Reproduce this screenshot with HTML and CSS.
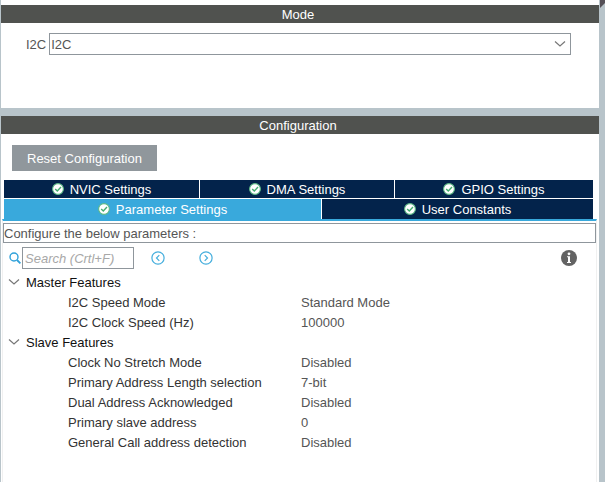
FILE: index.html
```html
<!DOCTYPE html>
<html lang="en">
<head>
<meta charset="utf-8">
<title>I2C Mode and Configuration</title>
<link rel="stylesheet" href="styles.css">
</head>
<body>
<svg class="defs" aria-hidden="true">
  <symbol id="check" viewBox="0 0 12 12">
    <circle cx="6" cy="6" r="5.4" fill="#fff" stroke="#5dba86" stroke-width="1.1"/>
    <path d="M3.2 6l2.1 2.1 3.7-4" fill="none" stroke="#45ad70" stroke-width="1.4"/>
  </symbol>
  <symbol id="chevron" viewBox="0 0 12 8">
    <path d="M1 1.5l5 4.5 5-4.5" fill="none" stroke="#777" stroke-width="1.2"/>
  </symbol>
</svg>
<main class="app">
  <section class="panel mode">
    <h2 class="bar">Mode</h2>
    <div class="mode-row">
      <label for="i2c">I2C</label>
      <div class="select-box">
        <select id="i2c"><option>I2C</option></select>
        <svg class="select-arrow"><use href="#chevron"/></svg>
      </div>
    </div>
  </section>
  <section class="panel config">
    <h2 class="bar">Configuration</h2>
    <button class="reset" type="button">Reset Configuration</button>
    <div class="tabs" role="tablist">
      <div class="tab-row top">
        <button class="tab" role="tab"><svg class="check"><use href="#check"/></svg>NVIC Settings</button>
        <button class="tab" role="tab"><svg class="check"><use href="#check"/></svg>DMA Settings</button>
        <button class="tab" role="tab"><svg class="check"><use href="#check"/></svg>GPIO Settings</button>
      </div>
      <div class="tab-row bottom">
        <button class="tab active" role="tab" aria-selected="true"><svg class="check"><use href="#check"/></svg>Parameter Settings</button>
        <button class="tab" role="tab"><svg class="check"><use href="#check"/></svg>User Constants</button>
      </div>
    </div>
    <div class="content">
      <p class="hint">Configure the below parameters :</p>
      <div class="toolbar">
        <label class="search-label" for="search" aria-label="Search">
          <svg class="lens" viewBox="0 0 12 12"><circle cx="5" cy="5" r="4" fill="none" stroke="#32a2da" stroke-width="1.4"/><path d="M8 8l3.4 3.4" stroke="#32a2da" stroke-width="1.8"/></svg>
        </label>
        <input id="search" class="search" type="text" placeholder="Search (Crtl+F)">
        <button class="nav" type="button" aria-label="Previous"><svg viewBox="0 0 14 14"><circle cx="7" cy="7" r="6.1"/><path d="M8.3 4.2L5.5 7l2.8 2.8"/></svg></button>
        <button class="nav next" type="button" aria-label="Next"><svg viewBox="0 0 14 14"><circle cx="7" cy="7" r="6.1"/><path d="M5.7 4.2L8.5 7 5.7 9.8"/></svg></button>
        <button class="info" type="button" aria-label="Information"><svg viewBox="0 0 16 16"><circle cx="8" cy="8" r="8" fill="#636363"/><circle cx="8" cy="3.8" r="1.4" fill="#fff"/><path d="M6 6.3h3v5.7h1v1H6v-1h1V7.3H6z" fill="#fff"/></svg></button>
      </div>
      <table class="params">
        <colgroup><col class="indent"><col class="name"><col></colgroup>
        <tbody>
          <tr><th colspan="3"><svg class="fold"><use href="#chevron"/></svg>Master Features</th></tr>
          <tr><td></td><td>I2C Speed Mode</td><td class="value">Standard Mode</td></tr>
          <tr><td></td><td>I2C Clock Speed (Hz)</td><td class="value">100000</td></tr>
          <tr><th colspan="3"><svg class="fold"><use href="#chevron"/></svg>Slave Features</th></tr>
          <tr><td></td><td>Clock No Stretch Mode</td><td class="value">Disabled</td></tr>
          <tr><td></td><td>Primary Address Length selection</td><td class="value">7-bit</td></tr>
          <tr><td></td><td>Dual Address Acknowledged</td><td class="value">Disabled</td></tr>
          <tr><td></td><td>Primary slave address</td><td class="value">0</td></tr>
          <tr><td></td><td>General Call address detection</td><td class="value">Disabled</td></tr>
        </tbody>
      </table>
    </div>
  </section>
</main>
<aside class="gutter"></aside>
</body>
</html>
```
FILE: styles.css
```css
* { box-sizing: border-box; }
body {
  margin: 0;
  min-height: 100vh;
  display: flex;
  background: #b8c4ca;
  color: #555;
  font: 13px/18px "Liberation Sans", Arial, sans-serif;
}
button, input, select { font: inherit; color: inherit; margin: 0; border-radius: 0; }
button { border: 0; padding: 0; background: none; }
svg { display: block; flex: none; }
.defs { display: none; }
.app {
  flex: 1;
  display: flex;
  flex-direction: column;
  gap: 8px;
  padding-left: 1px;
}
.gutter { width: 6px; }
.gutter::before {
  content: "";
  display: block;
  height: 8px;
  margin-left: 1px;
  background: #555057;
  clip-path: polygon(0 0, 100% 0, 100% 3px, 0 100%);
}
.panel { background: #fff; }
.mode { padding: 5px 0 53px; }
.config { flex: 1; display: flex; flex-direction: column; }
.bar {
  margin: 0;
  padding-right: 4px;
  height: 18px;
  background: #50524f;
  color: #fff;
  font-size: 13px;
  line-height: 19px;
  font-weight: 400;
  text-align: center;
}
.mode-row {
  display: flex;
  align-items: center;
  gap: 3px;
  padding: 10px 28px 0 25px;
  line-height: 19px;
}
.select-box { flex: 1; position: relative; }
.select-box select {
  display: block;
  width: 100%;
  height: 22px;
  padding: 0 1px;
  border: 1px solid #8f969c;
  background: #fff;
  appearance: none;
}
.select-arrow {
  position: absolute;
  right: 5px;
  top: 7px;
  width: 12px;
  height: 8px;
  pointer-events: none;
}
.reset {
  align-self: flex-start;
  height: 26px;
  margin: 11px 0 9px 11px;
  padding: 0 15px;
  background: #90979c;
  color: #fff;
  line-height: 19px;
}
.tabs {
  display: flex;
  flex-direction: column;
  gap: 1px;
  padding: 0 6px 0 3px;
}
.tab-row { display: grid; gap: 1px; }
.top { grid-template-columns: 195fr 194fr 198fr; }
.bottom { grid-template-columns: 317fr 271fr; }
.tab {
  display: flex;
  align-items: center;
  justify-content: center;
  gap: 6px;
  height: 18px;
  background: #03234b;
  color: #fff;
  line-height: 19px;
}
.bottom .tab { height: 20px; }
.tab.active { background: #39a9dc; }
.check { width: 12px; height: 12px; }
.content {
  flex: 1;
  margin: 0 2px 0 1px;
  border-top: 2px solid #39a9dc;
  border-right: 1px solid #f0f0f0;
  border-left: 1px solid #f0f0f0;
  padding-top: 2px;
}
.hint {
  margin: 0;
  height: 20px;
  border: 1px solid #8f969c;
  line-height: 19px;
}
.toolbar {
  display: flex;
  align-items: center;
  padding: 4px 19px 4px 6px;
}
.lens { width: 12px; height: 12px; margin-right: 1px; }
.search {
  width: 112px;
  height: 22px;
  padding: 0 2px;
  border: 1px solid #8f969c;
  background: #fff;
}
.search::placeholder { color: #a8a8a8; font-style: italic; opacity: 1; }
.nav { margin-left: 17px; }
.nav.next { margin-left: 34px; }
.nav svg { width: 14px; height: 14px; fill: none; stroke: #45aedd; stroke-width: 1.2; }
.info { margin-left: auto; }
.info svg { width: 16px; height: 16px; }
.params {
  width: 100%;
  border-collapse: collapse;
  table-layout: fixed;
  color: #333;
}
.indent { width: 65px; }
.name { width: 233px; }
.params th, .params td { height: 20px; padding: 0; text-align: left; white-space: nowrap; }
.params th { padding-left: 5px; color: #111; font-weight: 400; }
.params .value { color: #555; }
.fold { display: inline-block; width: 12px; height: 8px; margin-right: 6px; vertical-align: 1px; }
```
